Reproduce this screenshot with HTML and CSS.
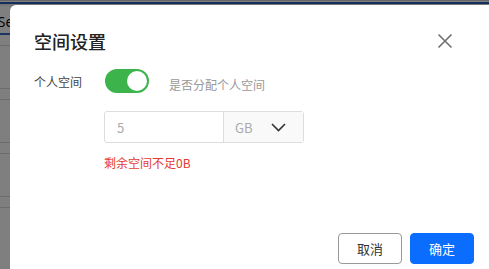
FILE: index.html
```html
<!DOCTYPE html>
<html lang="zh-CN">
<head>
    <meta charset="UTF-8">
    <title>空间设置</title>
    <link rel="stylesheet" href="styles.css">
</head>
<body>
    <!-- page behind the dialog -->
    <div class="page">
        <div class="topBar"></div>
        <div class="pageHead"><span class="headText">rSe</span></div>
        <div class="tableRow"></div>
        <div class="tableRow tall"></div>
        <div class="tableRow"></div>
        <div class="tableRow tall"></div>
        <div class="tableRow"></div>
        <div class="tableRow tall"></div>
        <div class="tableRow"></div>
    </div>
    <div class="mask"></div>

    <article class="dialog">
        <header class="dialogHead">
            <h2 class="dialogTitle">空间设置</h2>
            <span class="closeDialog">
                <svg width="16" height="16" viewBox="0 0 16 16">
                    <path d="M1.5 1.5 L14.5 14.5 M14.5 1.5 L1.5 14.5" stroke="#6f6f6f" stroke-width="1.6" fill="none"/>
                </svg>
            </span>
        </header>

        <section class="dialogBody">
            <div class="formRow">
                <label class="rowLabel">个人空间</label>
                <div class="switchWrap">
                    <span class="switch on"><span class="knob"></span></span>
                    <span class="hint">是否分配个人空间</span>
                </div>
            </div>

            <div class="formRow sizeRow">
                <div class="inputGroup">
                    <input class="sizeInput" type="text" placeholder="5">
                    <div class="unitSelect">
                        <span>GB</span>
                        <svg width="15" height="9" viewBox="0 0 15 9">
                            <path d="M1 1 L7.5 7.5 L14 1" stroke="#333" stroke-width="1.6" fill="none"/>
                        </svg>
                    </div>
                </div>
                <p class="errorText">剩余空间不足0B</p>
            </div>
        </section>

        <footer class="dialogFoot">
            <button class="btn cancel">取消</button>
            <button class="btn primary">确定</button>
        </footer>
    </article>
</body>
</html>
```

FILE: styles.css
```css
* {
    box-sizing: border-box;
}

body {
    margin: 0;
    width: 489px;
    height: 269px;
    overflow: hidden;
    font-family: "Noto Sans CJK SC", "Noto Sans", sans-serif;
    background-color: #fff;
    position: relative;
}

/* page content under the mask */
.page {
    width: 100%;
    height: 269px;
    overflow: hidden;
}
.topBar {
    height: 6px;
    border-top: 1px solid #ccc;
    background: linear-gradient(#fff 0, #fff 1px, #2b5cb8 1px, #2b5cb8 3px, #eee 3px);
}
.pageHead {
    height: 29px;
    border-bottom: 2px solid #3d6bc4;
    padding-top: 2px;
}
.headText {
    font-family: "Open Sans", sans-serif;
    font-size: 14px;
    color: #000;
    margin-left: -8px;
}
.tableRow {
    height: 11px;
    border-bottom: 1px solid #d8d8d8;
}
.tableRow.tall {
    height: 43px;
}
.tableRow:first-of-type {
    height: 21px;
}

.mask {
    position: absolute;
    left: 0;
    top: 0;
    width: 100%;
    height: 100%;
    background-color: rgba(0, 0, 0, 0.5);
}

/* dialog */
.dialog {
    position: absolute;
    left: 10px;
    top: 5px;
    width: 479px;
    height: 264px;
    background-color: #fff;
    border-radius: 6px 0 0 0;
    padding: 0 24px;
}
.dialogHead {
    display: flex;
    justify-content: space-between;
    align-items: center;
    height: 64px;
    padding: 7px 12px 0 0;
}
.dialogTitle {
    margin: 0;
    font-size: 18px;
    font-weight: 500;
    color: #222;
}
.closeDialog {
    display: flex;
    cursor: pointer;
}

.formRow {
    display: flex;
    align-items: center;
}
.rowLabel {
    width: 71px;
    font-size: 12px;
    color: #444;
}
.switchWrap {
    display: flex;
    align-items: flex-end;
    gap: 20px;
}
.switch {
    display: flex;
    width: 44px;
    height: 24px;
    border-radius: 12px;
    background-color: #3cb44b;
    padding: 2px;
    justify-content: flex-end;
}
.knob {
    width: 20px;
    height: 20px;
    border-radius: 50%;
    background-color: #fff;
}
.hint {
    font-size: 12px;
    color: #999;
}

.sizeRow {
    flex-direction: column;
    align-items: flex-start;
    padding-left: 70px;
    margin-top: 18px;
}
.inputGroup {
    display: flex;
    width: 200px;
    height: 32px;
    border: 1px solid #ddd;
    border-radius: 3px;
}
.sizeInput {
    width: 119px;
    border: none;
    border-right: 1px solid #ddd;
    padding: 0 12px;
    font-family: inherit;
    font-size: 13px;
    background: transparent;
}
.sizeInput::placeholder {
    color: #aaa;
}
.unitSelect {
    flex: 1;
    display: flex;
    align-items: center;
    justify-content: space-between;
    padding: 0 17px 0 11px;
    background-color: #f9f9f9;
    font-size: 13px;
    color: #aaa;
}
.errorText {
    margin: 11px 0 0;
    font-size: 12px;
    color: #e53a2f;
}

.dialogFoot {
    position: absolute;
    left: 328px;
    top: 228px;
    display: flex;
    gap: 8px;
}
.btn {
    width: 64px;
    height: 31px;
    border-radius: 4px;
    font-family: inherit;
    font-size: 13px;
    cursor: pointer;
}
.btn.cancel {
    background-color: #fff;
    border: 1px solid #999;
    color: #333;
}
.btn.primary {
    background-color: #0a6dfd;
    border: 1px solid #0a6dfd;
    color: #fff;
}
```
